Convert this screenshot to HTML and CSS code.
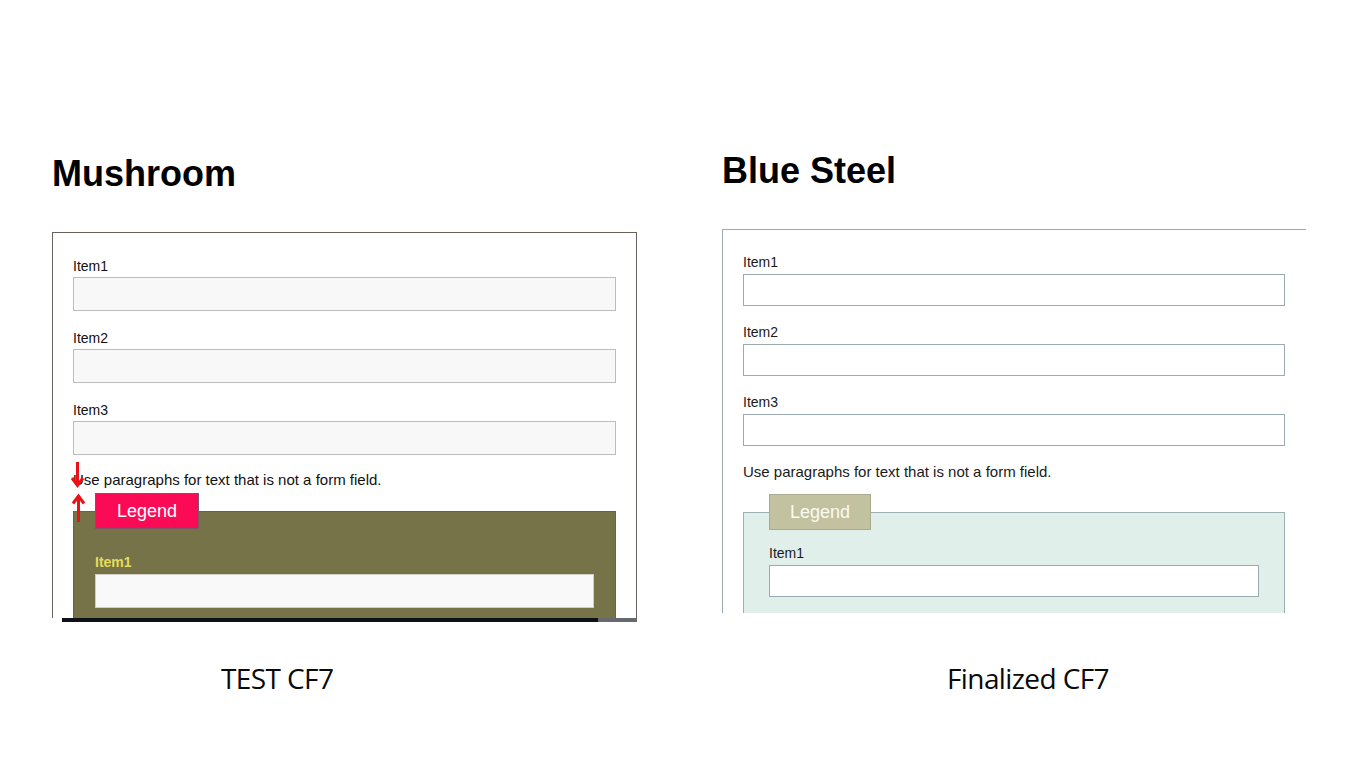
FILE: index.html
```html
<!DOCTYPE html>
<html lang="en">
<head>
<meta charset="utf-8">
<title>CF7 form styles</title>
<link rel="stylesheet" href="styles.css">
</head>
<body>
<main class="page">
  <section class="col col-mushroom">
    <h1 class="title">Mushroom</h1>
    <div class="clip clip-mushroom">
      <form class="form form-mushroom">
        <div class="field"><label>Item1</label><input type="text"></div>
        <div class="field"><label>Item2</label><input type="text"></div>
        <div class="field"><label>Item3</label><input type="text"></div>
        <p class="note">Use paragraphs for text that is not a form field.</p>
        <fieldset class="group">
          <legend>Legend</legend>
          <div class="field"><label>Item1</label><input type="text"></div>
        </fieldset>
        <svg class="arrows" viewBox="0 0 16 60" width="16" height="60" aria-hidden="true">
          <path d="M7.5 0 V23.5 M2 16 L7.5 23.5 L13 16" />
          <path d="M8.5 60 V34 M3 41.5 L8.5 34 L14 41.5" />
        </svg>
      </form>
    </div>
    <div class="scrollbar"><span class="thumb"></span><span class="track"></span></div>
    <p class="caption caption-test">TEST CF7</p>
  </section>

  <section class="col col-steel">
    <h1 class="title">Blue Steel</h1>
    <div class="clip clip-steel">
      <form class="form form-steel">
        <div class="field"><label>Item1</label><input type="text"></div>
        <div class="field"><label>Item2</label><input type="text"></div>
        <div class="field"><label>Item3</label><input type="text"></div>
        <p class="note">Use paragraphs for text that is not a form field.</p>
        <fieldset class="group">
          <legend>Legend</legend>
          <div class="field"><label>Item1</label><input type="text"></div>
        </fieldset>
      </form>
    </div>
    <p class="caption caption-final">Finalized CF7</p>
  </section>
</main>
</body>
</html>
```

FILE: styles.css
```css
* { box-sizing: border-box; }

html, body {
  margin: 0;
  background: #fff;
}

body {
  font-family: "Liberation Sans", Arial, Helvetica, sans-serif;
  color: #111;
}

.page {
  display: flex;
  gap: 85px;
  padding: 151px 0 0 52px;
}

.col {
  display: flex;
  flex-direction: column;
}

.col-mushroom {
  width: 585px;
  padding-top: 3px;
}

.col-steel {
  width: 584px;
}

.title {
  margin: 0 0 38px;
  font-size: 36px;
  line-height: 40px;
  font-weight: 700;
  color: #000;
}

.clip {
  overflow: hidden;
}

.clip-mushroom { height: 386px; }
.clip-steel { height: 384px; }

.form {
  position: relative;
  margin: 0;
}

.field label {
  display: block;
  font-size: 14px;
  line-height: 16px;
}

.field input {
  display: block;
  width: 100%;
  margin: 0;
  padding: 0 8px;
  font: inherit;
  border-radius: 0;
  outline: none;
  -webkit-appearance: none;
  appearance: none;
}

.note {
  font-size: 15px;
  line-height: 18px;
  margin: 0;
}

.group {
  margin: 0;
  min-width: 0;
}

.group legend {
  font-size: 18px;
  line-height: 20px;
  padding: 7px 20px;
  margin: 0;
}

/* ---------- Mushroom ---------- */
.form-mushroom {
  width: 585px;
  border: 1px solid #67625c;
  padding: 25px 20px 40px;
}

.form-mushroom .field label {
  margin-bottom: 3px;
  color: #111;
}

.form-mushroom .field input {
  height: 34px;
  background: #f8f8f8;
  border: 1px solid #bcbcbc;
}

.form-mushroom .field + .field { margin-top: 19px; }

.form-mushroom .note {
  margin: 16px 0 4px;
}

.form-mushroom .group {
  background: #767349;
  border: 1px solid #67643f;
  padding: 25px 21px 40px;
}

.form-mushroom .group legend {
  background: #fb0b55;
  border: 1px solid #7e5566;
  color: #fff;
  padding: 7px 21px;
}

.form-mushroom .group .field label {
  color: #e4dc5b;
  font-weight: 700;
  margin-bottom: 4px;
}

.form-mushroom .group .field input {
  background: #f9f9f9;
  border: 1px solid #d0d0c8;
}

.arrows {
  position: absolute;
  left: 17px;
  top: 229px;
  fill: none;
  stroke: #ea1119;
  stroke-width: 3;
}

.scrollbar {
  display: flex;
  height: 4px;
  margin-left: 10px;
  width: 575px;
}

.scrollbar .thumb {
  width: 536px;
  background: #0d1219;
}

.scrollbar .track {
  flex: 1;
  background: #68686f;
}

/* ---------- Blue Steel ---------- */
.form-steel {
  width: 624px;
  border: 1px solid #9aacb1;
  padding: 24px 60px 40px 20px;
}

.form-steel .field label {
  margin-bottom: 4px;
  color: #1a1a1a;
}

.form-steel .field input {
  height: 32px;
  background: #fff;
  border: 1px solid #9aacb1;
}

.form-steel .field + .field { margin-top: 18px; }

.form-steel .note {
  margin: 17px 0 13px;
  color: #1a1a1a;
}

.form-steel .group {
  background: #e1efeb;
  border: 1px solid #9cb0b3;
  padding: 15px 25px 40px;
}

.form-steel .group legend {
  background: #c2c1a0;
  border: 1px solid #a9aa8f;
  color: #fbfbf2;
  padding: 7px 20px;
}

/* ---------- Captions ---------- */
.caption {
  font-family: "Open Sans", "Liberation Sans", sans-serif;
  font-size: 28px;
  line-height: 32px;
  letter-spacing: -0.6px;
  color: #0a0a0a;
  margin: 40px 0 0;
}

.caption-test { padding-left: 169px; }

.caption-final {
  margin-top: 49px;
  padding-left: 225px;
}
```
